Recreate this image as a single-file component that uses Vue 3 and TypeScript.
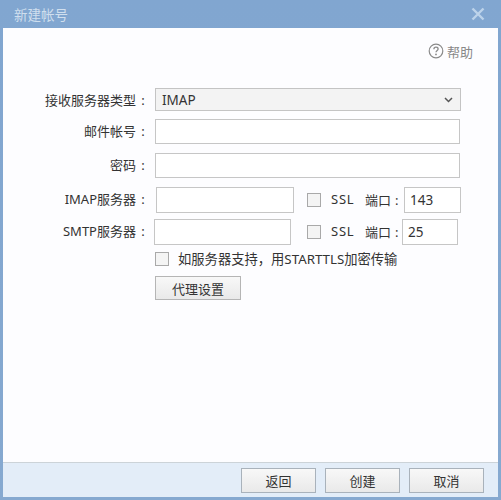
<script setup lang="ts">
const title: string = "新建帐号";
</script>

<template>
  <div class="window">
    <header class="titlebar">
      <span class="title">{{ title }}</span>
      <svg class="close" width="14" height="14" viewBox="0 0 14 14" aria-label="关闭">
        <path d="M1.5 1.5 L12.5 12.5 M12.5 1.5 L1.5 12.5" stroke="#bcd3ea" stroke-width="2.4" fill="none" />
      </svg>
    </header>
    <main class="content">
      <div class="help">
        <svg width="16" height="16" viewBox="0 0 16 16">
          <circle cx="8" cy="8" r="6.8" fill="none" stroke="#8a8a8a" stroke-width="1.2" />
          <path d="M5.9 6.2 C5.9 4.9 6.9 4.2 8 4.2 C9.2 4.2 10.1 5 10.1 6 C10.1 7.4 8 7.5 8 9.3" fill="none" stroke="#8a8a8a" stroke-width="1.3" />
          <circle cx="8" cy="11.4" r="0.9" fill="#8a8a8a" />
        </svg>
        <span>帮助</span>
      </div>
      <form class="form">
        <div class="row row-select">
          <label class="label">接收服务器类型<span class="colon">:</span></label>
          <div class="select">
            <span>IMAP</span>
            <svg width="9" height="6" viewBox="0 0 9 6"><path d="M1 1 L4.5 4.5 L8 1" fill="none" stroke="#555" stroke-width="1.5" /></svg>
          </div>
        </div>
        <div class="row row-full">
          <label class="label">邮件帐号<span class="colon">:</span></label>
          <input class="input wide-a" type="text" />
        </div>
        <div class="row row-full">
          <label class="label">密码<span class="colon">:</span></label>
          <input class="input wide-a" type="text" />
        </div>
        <div class="row row-server imap">
          <label class="label">IMAP服务器<span class="colon">:</span></label>
          <input class="input server" type="text" />
          <span class="check"></span>
          <span class="ssl">SSL</span>
          <span class="port-label">端口<span class="port-colon">:</span></span>
          <input class="input port" type="text" value="143" />
        </div>
        <div class="row row-server smtp">
          <label class="label">SMTP服务器<span class="colon">:</span></label>
          <input class="input server" type="text" />
          <span class="check"></span>
          <span class="ssl">SSL</span>
          <span class="port-label">端口<span class="port-colon">:</span></span>
          <input class="input port" type="text" value="25" />
        </div>
        <div class="row row-tls">
          <span class="check"></span>
          <span class="tls-text">如服务器支持，用STARTTLS加密传输</span>
        </div>
        <button class="btn proxy" type="button">代理设置</button>
      </form>
    </main>
    <footer class="footer">
      <button class="btn foot-btn" type="button">返回</button>
      <button class="btn foot-btn" type="button">创建</button>
      <button class="btn foot-btn" type="button">取消</button>
    </footer>
  </div>
</template>

<style>
html, body { margin: 0; padding: 0; background: #85a8cf; }
</style>

<style scoped>
.window {
  width: 501px;
  height: 500px;
  box-sizing: border-box;
  display: flex;
  flex-direction: column;
  padding: 0 3px 3px 3px;
  background: linear-gradient(#81a6d0, #86a9d0);
  font-family: "Noto Sans", "Noto Sans CJK SC", "Liberation Sans", sans-serif;
  font-size: 13px;
  color: #333;
}
.titlebar {
  height: 28px;
  flex: none;
  display: flex;
  align-items: center;
  justify-content: space-between;
  padding: 0 13px 0 11px;
}
.title { color: #d0dfee; font-size: 13.5px; }
.content {
  flex: 1;
  background: #fdfdff;
  padding: 14px 0 0 0;
  display: flex;
  flex-direction: column;
  min-height: 0;
}
.help {
  display: flex;
  align-items: center;
  justify-content: flex-end;
  gap: 3px;
  height: 18px;
  padding-right: 25px;
  color: #888;
  font-size: 13px;
}
.form {
  display: flex;
  flex-direction: column;
  margin-top: 28px;
}
.row { display: flex; align-items: center; }
.label {
  width: 147px;
  flex: none;
  text-align: right;
  white-space: nowrap;
  padding-bottom: 3px;
  box-sizing: border-box;
}
.row-select .label { padding-bottom: 0; }
.colon {
  display: inline-block;
  width: 14px;
  text-align: center;
}
.select {
  width: 306px;
  height: 23px;
  margin-left: 5px;
  box-sizing: border-box;
  display: flex;
  align-items: center;
  justify-content: space-between;
  padding: 0 7px 0 6px;
  border: 1px solid #c4c4c4;
  background: #f3f3f3;
  font-size: 13.5px;
}
.input {
  box-sizing: border-box;
  border: 1px solid #c6c6c6;
  background: #fff;
  height: 26px;
  padding: 0 5px;
  margin: 0;
  font: inherit;
  color: #333;
  outline: none;
}
.wide-a { width: 305px; height: 25px; margin-left: 5px; }
.row-full { margin-top: 8px; }
.row-full + .row-full { margin-top: 9px; }
.row-full + .row-server { margin-top: 9px; }
.imap .server { width: 138px; margin-left: 6px; }
.smtp .server { width: 137px; margin-left: 4px; }
.imap .check { margin-left: 13px; }
.smtp .check { margin-left: 16px; }
.smtp { margin-top: 6px; }
.check {
  display: block;
  width: 14px;
  height: 14px;
  flex: none;
  box-sizing: border-box;
  border: 1px solid #a9a9a9;
  background: #f4f4f4;
}
.ssl { margin-left: 10px; width: 25px; white-space: nowrap; letter-spacing: 0.8px; padding-bottom: 2px; }
.port-label { margin-left: 9px; white-space: nowrap; width: 36px; padding-bottom: 2px; }
.port-colon { margin-left: 4px; }
.imap .port { width: 57px; margin-left: 3px; }
.smtp .port { width: 56px; margin-left: 1px; }
.port { font-size: 13.5px; }
.row-tls { margin-top: 4px; padding-left: 152px; }
.tls-text { margin-left: 9px; white-space: nowrap; font-size: 13.3px; }
.btn {
  box-sizing: border-box;
  border: 1px solid #b5b5b5;
  background: linear-gradient(#f8f8f8, #e9e9e9);
  font: inherit;
  color: #333;
  padding: 0;
}
.proxy { width: 86px; height: 24px; margin: 8px 0 0 152px; }
.footer {
  flex: none;
  height: 35px;
  box-sizing: border-box;
  border-top: 1px solid #ccd3d8;
  background: #e3edf8;
  display: flex;
  align-items: center;
  justify-content: flex-end;
  gap: 9px;
  padding: 0 14px 0 0;
}
.foot-btn { width: 75px; height: 25px; border-color: #a9b2bb; }
</style>
